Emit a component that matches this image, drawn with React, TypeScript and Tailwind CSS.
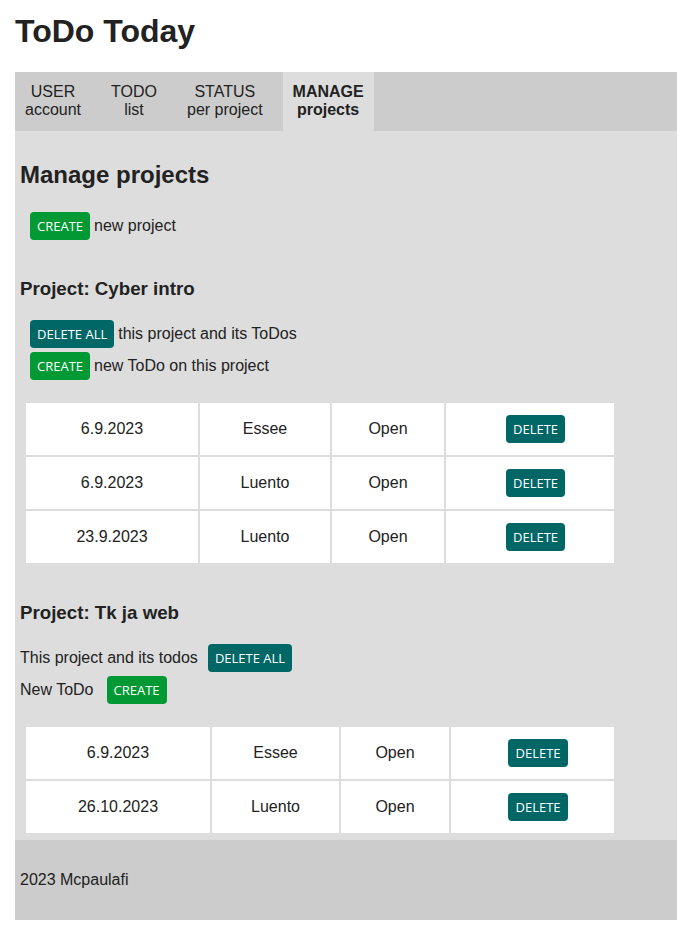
import React from "react";

type Todo = { date: string; title: string; status: string };

const cyberTodos: Todo[] = [
  { date: "6.9.2023", title: "Essee", status: "Open" },
  { date: "6.9.2023", title: "Luento", status: "Open" },
  { date: "23.9.2023", title: "Luento", status: "Open" },
];

const webTodos: Todo[] = [
  { date: "6.9.2023", title: "Essee", status: "Open" },
  { date: "26.10.2023", title: "Luento", status: "Open" },
];

const navItems = [
  { top: "USER", bottom: "account" },
  { top: "TODO", bottom: "list" },
  { top: "STATUS", bottom: "per project" },
  { top: "MANAGE", bottom: "projects", active: true },
];

function Button({ label, tone, className = "" }: { label: string; tone: "green" | "teal"; className?: string }) {
  const bg = tone === "green" ? "bg-[#009933]" : "bg-[#006666]";
  return (
    <button
      className={`${bg} ${className} inline-block shrink-0 rounded-[4px] px-[7px] py-[5px] font-['Open_Sans',sans-serif] text-[13px] leading-[18px] text-white`}
    >
      {label}
    </button>
  );
}

function TodoTable({ todos, widths }: { todos: Todo[]; widths: string[] }) {
  return (
    <table className="ml-[4px] border-separate border-spacing-[2px] bg-[#dddddd]">
      <tbody>
        {todos.map((todo, i) => (
          <tr key={i}>
            <td className={`${widths[0]} h-[52px] bg-white p-0 text-center`}>{todo.date}</td>
            <td className={`${widths[1]} h-[52px] bg-white p-0 text-center`}>{todo.title}</td>
            <td className={`${widths[2]} h-[52px] bg-white p-0 text-center`}>{todo.status}</td>
            <td className={`${widths[3]} h-[52px] bg-white p-0 pl-[11px] text-center`}>
              <Button label="DELETE" tone="teal" />
            </td>
          </tr>
        ))}
      </tbody>
    </table>
  );
}

export default function App() {
  return (
    <div className="min-h-[928px] bg-white pb-[8px] font-['Liberation_Sans',Arial,sans-serif] text-[16px] text-[#222222]">
      <div className="ml-[15px] w-[662px]">
        <h1 className="pt-[13px] pb-[23px] text-[32px] font-bold leading-[36px]">ToDo Today</h1>

        <nav className="flex gap-[10px] bg-[#cccccc]">
          {navItems.map((item) => (
            <a
              key={item.top}
              href="#"
              className={`block px-[10px] pt-[11px] pb-[12px] text-center leading-[18px] ${
                item.active ? "bg-[#dddddd] font-bold" : ""
              }`}
            >
              {item.top}
              <br />
              {item.bottom}
            </a>
          ))}
        </nav>

        <main className="bg-[#dddddd] px-[5px] pt-[30px] pb-[5px]">
          <h2 className="text-[24px] font-bold leading-[28px]">Manage projects</h2>
          <div className="mt-[23px] ml-[10px] flex items-center gap-[4px] leading-[18px]">
            <Button label="CREATE" tone="green" />
            <span>new project</span>
          </div>

          <h3 className="mt-[38px] text-[18.72px] font-bold leading-[22px]">Project: Cyber intro</h3>
          <div className="mt-[20px] ml-[10px] flex flex-col gap-[4px] leading-[18px]">
            <div className="flex items-center gap-[4px]">
              <Button label="DELETE ALL" tone="teal" />
              <span>this project and its ToDos</span>
            </div>
            <div className="flex items-center gap-[4px]">
              <Button label="CREATE" tone="green" />
              <span>new ToDo on this project</span>
            </div>
          </div>
          <div className="mt-[21px]">
            <TodoTable todos={cyberTodos} widths={["w-[172px]", "w-[130px]", "w-[112px]", "w-[168px]"]} />
          </div>

          <h3 className="mt-[37px] text-[18.72px] font-bold leading-[22px]">Project: Tk ja web</h3>
          <div className="mt-[20px] flex flex-col gap-[4px] leading-[18px]">
            <div className="flex items-center">
              <span>This project and its todos</span>
              <Button label="DELETE ALL" tone="teal" className="ml-[10px]" />
            </div>
            <div className="flex items-center">
              <span>New ToDo</span>
              <Button label="CREATE" tone="green" className="ml-[13px]" />
            </div>
          </div>
          <div className="mt-[21px]">
            <TodoTable todos={webTodos} widths={["w-[184px]", "w-[127px]", "w-[108px]", "w-[163px]"]} />
          </div>
        </main>

        <footer className="bg-[#cccccc] px-[5px] py-[31px] leading-[18px]">2023 Mcpaulafi</footer>
      </div>
    </div>
  );
}
